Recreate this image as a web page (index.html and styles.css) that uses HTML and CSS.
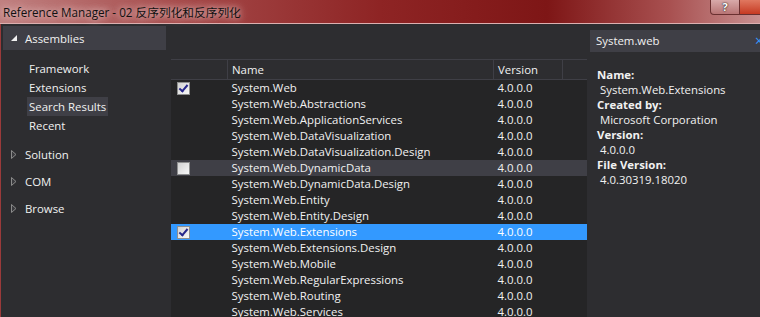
FILE: index.html
```html
<!DOCTYPE html>
<html>

<head>
    <link rel="stylesheet" href="styles.css">
</head>

<body>

    <div class="titlebar">
        <span class="title">Reference Manager - 02 反序列化和反序列化</span>
        <div class="caption-buttons">
            <span class="help-btn">?</span>
            <span class="close-btn"></span>
        </div>
    </div>

    <div class="window">
        <div class="left">
            <div class="group-head">
                <span class="arrow-open"></span>
                Assemblies
            </div>
            <ul class="group-items">
                <li>Framework</li>
                <li>Extensions</li>
                <li class="active">Search Results</li>
                <li>Recent</li>
            </ul>
            <div class="group">
                <svg class="arrow-closed" width="6" height="9" viewBox="0 0 6 9"><polygon points="0.5,0.5 5,4.5 0.5,8.5" fill="#3a3a3e" stroke="#8a8a8a" stroke-width="1"/></svg>
                Solution
            </div>
            <div class="group">
                <svg class="arrow-closed" width="6" height="9" viewBox="0 0 6 9"><polygon points="0.5,0.5 5,4.5 0.5,8.5" fill="#3a3a3e" stroke="#8a8a8a" stroke-width="1"/></svg>
                COM
            </div>
            <div class="group">
                <svg class="arrow-closed" width="6" height="9" viewBox="0 0 6 9"><polygon points="0.5,0.5 5,4.5 0.5,8.5" fill="#3a3a3e" stroke="#8a8a8a" stroke-width="1"/></svg>
                Browse
            </div>
        </div>

        <div class="middle">
            <table class="refs">
                <thead>
                    <tr>
                        <th class="col-check"></th>
                        <th class="col-name">Name</th>
                        <th class="col-version">Version</th>
                        <th class="col-rest"></th>
                    </tr>
                </thead>
                <tbody>
                    <tr><td><span class="check on"></span></td><td>System.Web</td><td>4.0.0.0</td><td></td></tr>
                    <tr><td></td><td>System.Web.Abstractions</td><td>4.0.0.0</td><td></td></tr>
                    <tr><td></td><td>System.Web.ApplicationServices</td><td>4.0.0.0</td><td></td></tr>
                    <tr><td></td><td>System.Web.DataVisualization</td><td>4.0.0.0</td><td></td></tr>
                    <tr><td></td><td>System.Web.DataVisualization.Design</td><td>4.0.0.0</td><td></td></tr>
                    <tr class="hover"><td><span class="check"></span></td><td>System.Web.DynamicData</td><td>4.0.0.0</td><td></td></tr>
                    <tr><td></td><td>System.Web.DynamicData.Design</td><td>4.0.0.0</td><td></td></tr>
                    <tr><td></td><td>System.Web.Entity</td><td>4.0.0.0</td><td></td></tr>
                    <tr><td></td><td>System.Web.Entity.Design</td><td>4.0.0.0</td><td></td></tr>
                    <tr class="selected"><td><span class="check on"></span></td><td>System.Web.Extensions</td><td>4.0.0.0</td><td></td></tr>
                    <tr><td></td><td>System.Web.Extensions.Design</td><td>4.0.0.0</td><td></td></tr>
                    <tr><td></td><td>System.Web.Mobile</td><td>4.0.0.0</td><td></td></tr>
                    <tr><td></td><td>System.Web.RegularExpressions</td><td>4.0.0.0</td><td></td></tr>
                    <tr><td></td><td>System.Web.Routing</td><td>4.0.0.0</td><td></td></tr>
                    <tr><td></td><td>System.Web.Services</td><td>4.0.0.0</td><td></td></tr>
                </tbody>
            </table>
        </div>

        <div class="right">
            <div class="search-head">
                System.web
                <span class="search-clear">&times;</span>
            </div>
            <dl class="details">
                <dt>Name:</dt>
                <dd>System.Web.Extensions</dd>
                <dt>Created by:</dt>
                <dd>Microsoft Corporation</dd>
                <dt>Version:</dt>
                <dd>4.0.0.0</dd>
                <dt>File Version:</dt>
                <dd>4.0.30319.18020</dd>
            </dl>
        </div>
    </div>

</body>

</html>
```

FILE: styles.css
```css
body {
    margin: 0;
    width: 760px;
    height: 317px;
    overflow: hidden;
    background-color: #2d2d30;
    font-family: "Open Sans", "Noto Sans", Arial, sans-serif;
    font-size: 11.4px;
    color: #f1f1f1;
}

/* title bar */
.titlebar {
    height: 23px;
    display: flex;
    justify-content: space-between;
    background: linear-gradient(90deg, #c08080 0%, #a44848 25%, #8e2424 50%, #7e1616 72%, #a85050 88%, #c89090 100%);
    border-bottom: 1px solid #dcb0b0;
}

.title {
    padding: 3px 0 0 3px;
    font-family: "Open Sans", "Noto Sans CJK SC", sans-serif;
    font-size: 11.7px;
    color: #111;
    white-space: nowrap;
    text-shadow: 0 0 6px #e8c8c8, 0 0 10px #e0b8b8;
}

.caption-buttons {
    display: flex;
    align-items: flex-start;
}

.help-btn {
    width: 28px;
    height: 14px;
    border: 1px solid #6a3030;
    border-top: none;
    border-radius: 0 0 0 4px;
    background: linear-gradient(#d8aaaa, #b87474);
    color: #fff;
    font-weight: bold;
    font-size: 11px;
    line-height: 13px;
    text-align: center;
    text-shadow: 0 0 2px #333, 0 0 1px #000;
}

.close-btn {
    width: 20px;
    height: 14px;
    border-bottom: 1px solid #6a3030;
    background: linear-gradient(#e07860, #c63a22);
}

/* main window */
.window {
    display: flex;
    height: 293px;
    border-left: 1px solid #9a3a3a;
}

.left {
    width: 163px;
    padding: 2px 0 0 2px;
}

.group-head {
    height: 24px;
    display: flex;
    align-items: center;
    background-color: #3f3f46;
}

.arrow-open {
    width: 0;
    height: 0;
    margin: 0 8px 0 8px;
    border-left: 6px solid transparent;
    border-bottom: 6px solid #f1f1f1;
}

.arrow-closed {
    margin: 0 8px 0 8px;
}

.group-items {
    list-style: none;
    margin: 9px 0 6px 0;
    padding: 0;
}

.group-items li {
    height: 19px;
    line-height: 19px;
    margin-left: 24px;
    padding: 0 2px;
    width: fit-content;
    white-space: nowrap;
}

.group-items li.active {
    background-color: #3f3f46;
}

.group {
    height: 27px;
    display: flex;
    align-items: center;
}

/* reference list */
.middle {
    width: 417px;
    padding: 35px 0 0 5px;
}

.refs {
    width: 416px;
    border-collapse: collapse;
    background-color: #252526;
}

.refs th {
    height: 19px;
    padding: 0 4px;
    text-align: left;
    font-weight: normal;
    background-color: #2d2d30;
    border-top: 1px solid #3f3f46;
    border-bottom: 1px solid #3f3f46;
    border-left: 1px solid #3f3f46;
}

.refs th.col-check {
    width: 48px;
    border-left: none;
}

.refs th.col-name {
    width: 257px;
}

.refs th.col-version {
    width: 60px;
}

.refs td {
    height: 16px;
    padding: 0 4px;
    line-height: 16px;
    white-space: nowrap;
}

.refs td:first-child {
    padding-left: 6px;
}

.refs tr.hover td {
    background-color: #3f3f46;
}

.refs tr.selected td {
    background-color: #3399ff;
    color: #fff;
}

.check {
    display: block;
    width: 11px;
    height: 11px;
    border: 1px solid #8e8f8f;
    background: linear-gradient(135deg, #d2d2d2, #f8f8f8);
    position: relative;
}

.check.on::after {
    content: "";
    position: absolute;
    left: 3px;
    top: 0px;
    width: 3px;
    height: 7px;
    border-right: 2px solid #26268a;
    border-bottom: 2px solid #26268a;
    transform: rotate(40deg);
}

/* details panel */
.right {
    flex: 1;
    padding: 6px 0 0 2px;
}

.search-head {
    height: 22px;
    line-height: 22px;
    padding-left: 6px;
    background-color: #3f3f46;
    position: relative;
}

.search-clear {
    position: absolute;
    right: -3px;
    top: 0;
    color: #3399ff;
    font-size: 14px;
}

.details {
    margin: 15px 0 0 7px;
    line-height: 15px;
}

.details dt {
    font-weight: bold;
}

.details dd {
    margin: 0 0 0 3px;
}
```
